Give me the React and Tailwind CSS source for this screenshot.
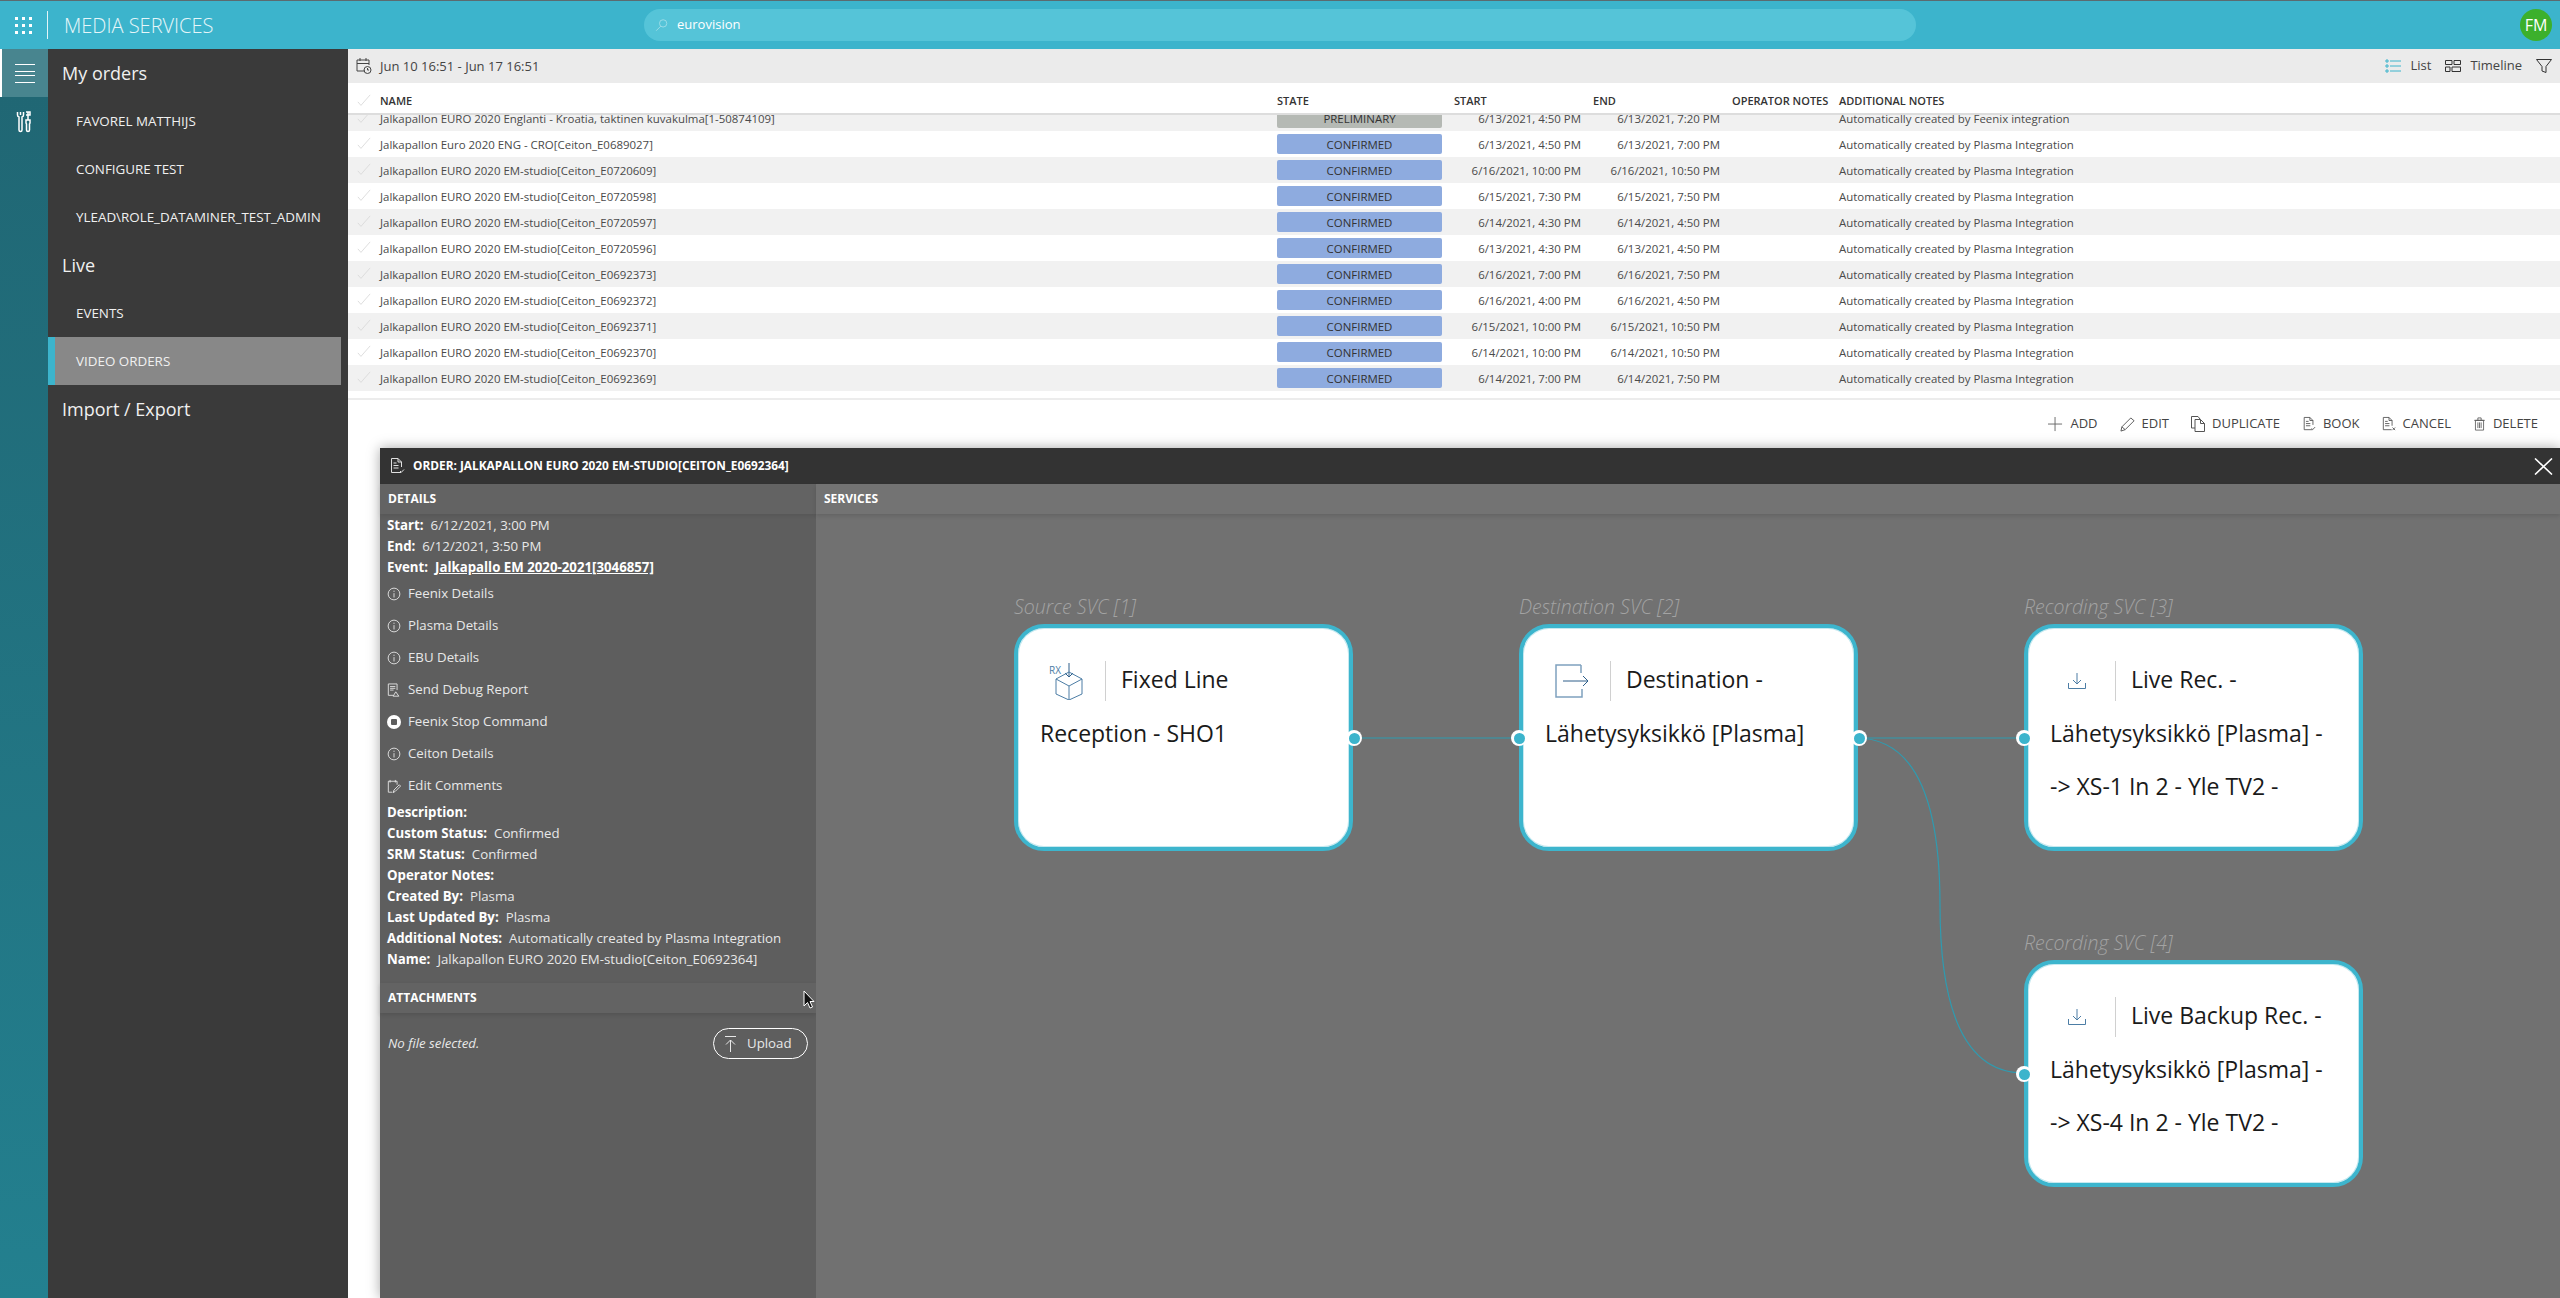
import React from 'react';

const rows = [
  { name: 'Jalkapallon EURO 2020 Englanti - Kroatia, taktinen kuvakulma[1-50874109]', state: 'PRELIMINARY', start: '6/13/2021, 4:50 PM', end: '6/13/2021, 7:20 PM', notes: 'Automatically created by Feenix integration' },
  { name: 'Jalkapallon Euro 2020 ENG - CRO[Ceiton_E0689027]', state: 'CONFIRMED', start: '6/13/2021, 4:50 PM', end: '6/13/2021, 7:00 PM' },
  { name: 'Jalkapallon EURO 2020 EM-studio[Ceiton_E0720609]', state: 'CONFIRMED', start: '6/16/2021, 10:00 PM', end: '6/16/2021, 10:50 PM' },
  { name: 'Jalkapallon EURO 2020 EM-studio[Ceiton_E0720598]', state: 'CONFIRMED', start: '6/15/2021, 7:30 PM', end: '6/15/2021, 7:50 PM' },
  { name: 'Jalkapallon EURO 2020 EM-studio[Ceiton_E0720597]', state: 'CONFIRMED', start: '6/14/2021, 4:30 PM', end: '6/14/2021, 4:50 PM' },
  { name: 'Jalkapallon EURO 2020 EM-studio[Ceiton_E0720596]', state: 'CONFIRMED', start: '6/13/2021, 4:30 PM', end: '6/13/2021, 4:50 PM' },
  { name: 'Jalkapallon EURO 2020 EM-studio[Ceiton_E0692373]', state: 'CONFIRMED', start: '6/16/2021, 7:00 PM', end: '6/16/2021, 7:50 PM' },
  { name: 'Jalkapallon EURO 2020 EM-studio[Ceiton_E0692372]', state: 'CONFIRMED', start: '6/16/2021, 4:00 PM', end: '6/16/2021, 4:50 PM' },
  { name: 'Jalkapallon EURO 2020 EM-studio[Ceiton_E0692371]', state: 'CONFIRMED', start: '6/15/2021, 10:00 PM', end: '6/15/2021, 10:50 PM' },
  { name: 'Jalkapallon EURO 2020 EM-studio[Ceiton_E0692370]', state: 'CONFIRMED', start: '6/14/2021, 10:00 PM', end: '6/14/2021, 10:50 PM' },
  { name: 'Jalkapallon EURO 2020 EM-studio[Ceiton_E0692369]', state: 'CONFIRMED', start: '6/14/2021, 7:00 PM', end: '6/14/2021, 7:50 PM' },
];

const cols = 'grid grid-cols-[32px_897px_177px_139px_139px_107px_1fr] items-center';

// all icons are thin 1px line drawings on a 16 box
function Ico({ className, children, box = '0 0 16 16' }) {
  return (
    <svg viewBox={box} fill="none" stroke="currentColor" strokeWidth="1" className={className}>
      {children}
    </svg>
  );
}

const Tick = () => (
  <Ico className="w-[14px] h-[14px] ml-[9px] text-[#d9d9d9]">
    <path d="M1 9l3.5 4L15 1" />
  </Ico>
);

const InfoIcon = () => (
  <Ico className="w-[14px] h-[14px]">
    <circle cx="8" cy="8" r="6.7" />
    <path d="M8 7v5M8 4.2v1.4" />
  </Ico>
);

const DocCheck = ({ className }) => (
  <Ico className={className}>
    <path d="M12 14.5H2.5v-14H9L12.5 4v5M9 .5V4h3.5M4.5 5h3M4.5 7.5h5M4.5 10h5M11 13l1.3 1.3L15 11.5" />
  </Ico>
);

function SideRow({ label, head, active }) {
  if (head) {
    return <div className="h-12 flex items-center pl-[14px] text-[18px] text-[#f0f0f0]">{label}</div>;
  }
  return (
    <div className={`h-12 mr-[7px] flex items-center text-[13.4px] text-[#f0f0f0] ${active ? 'bg-[#888888] border-l-[7px] border-[#3cb4cc] pl-[21px]' : 'pl-[28px]'}`}>
      {label}
    </div>
  );
}

function Row({ row, grey, clipped }) {
  return (
    <div className={`${cols} h-[26px] text-[11.45px] text-[#4a4a4a] ${grey ? 'bg-[#f1f1f1]' : 'bg-white'} ${clipped ? '-mt-[10px]' : ''}`}>
      <Tick />
      <div className="pt-[2px]">{row.name}</div>
      <div className={`w-[165px] h-5 pt-[1px] rounded-[2px] flex items-center justify-center text-[#333] ${row.state === 'PRELIMINARY' ? 'bg-[#b5b9b4]' : 'bg-[#8eabdf]'}`}>
        {row.state}
      </div>
      <div className="pt-[2px] text-right pr-[12px]">{row.start}</div>
      <div className="pt-[2px] text-right pr-[12px]">{row.end}</div>
      <div></div>
      <div className="pt-[2px]">{row.notes || 'Automatically created by Plasma Integration'}</div>
    </div>
  );
}

function Action({ icon, label }) {
  return (
    <div className="flex items-center gap-[7px] text-[13px] text-[#444]">
      {icon}
      <span>{label}</span>
    </div>
  );
}

function Field({ k, v }) {
  return (
    <div className="h-[21px] leading-[21px] whitespace-nowrap">
      <b className="font-bold text-white">{k}</b>
      {v && <span className="ml-[7px]">{v}</span>}
    </div>
  );
}

function DetailLink({ icon, label }) {
  return (
    <div className="h-8 flex items-center gap-[7px]">
      <span className="w-[14px] flex justify-center">{icon}</span>
      {label}
    </div>
  );
}

const RxIcon = () => (
  <Ico className="w-[36px] h-[38px] text-[#4c7da5]" box="0 0 36 38">
    <path d="M20 1v14M16 11l4 4 4-4" className="text-[#2e5f8a]" />
    <path d="M20 10l13 7v15l-13 6-13-6V17zM7 17l13 7 13-7M20 24v14M20 12v0" />
    <text x="0" y="12" fontSize="10" stroke="none" fill="#4c7da5">RX</text>
  </Ico>
);

const DestIcon = () => (
  <Ico className="w-[34px] h-[34px]" box="0 0 34 34">
    <path d="M26 1H1v32h26v-8M26 1v8" stroke="#7fa1bf" strokeWidth="1.5" />
    <path d="M8 17h25M28 12l5 5-5 5" stroke="#2e5f8a" />
  </Ico>
);

const RecIcon = () => (
  <Ico className="w-[18px] h-[16px] text-[#4c7da5]" box="0 0 18 16">
    <path d="M9 0v11M5 7l4 4 4-4M.5 10v5.5h17V10" />
  </Ico>
);

function Port({ side, top }) {
  return (
    <div className={`absolute w-4 h-4 rounded-full bg-white flex items-center justify-center ${side} ${top}`}>
      <div className="w-[11px] h-[11px] rounded-full bg-[#3cb4cc]"></div>
    </div>
  );
}

function ServiceNode({ pos, label, icon, title, lines, left, right }) {
  return (
    <div className={`absolute w-[339px] h-[227px] ${pos}`}>
      <div className="absolute -top-[29px] left-0 h-6 leading-6 italic font-light text-[19.5px] text-[#a3a3a3] whitespace-nowrap">{label}</div>
      <div className="relative h-full rounded-[30px] border-4 border-[#3db5cd] bg-white shadow-[inset_0_0_0_1px_#c6e9f0] pt-[26px] pl-[22px] text-[23px] text-[#1a1a1a]">
        <div className="flex h-[53px] items-center">
          <div className="w-[66px] h-10 pr-[11px] flex items-center justify-center shrink-0 border-r border-[#d0d0d0]">{icon}</div>
          <div className="pl-[15px] pb-[3px] whitespace-nowrap">{title}</div>
        </div>
        {lines.map((l) => (
          <div key={l} className="h-[53px] leading-[53px] whitespace-nowrap">{l}</div>
        ))}
        {left && <Port side="-left-[12px]" top="top-[102px]" />}
        {right && <Port side="-right-[13px]" top="top-[102px]" />}
      </div>
    </div>
  );
}

export default function App() {
  return (
    <div className="h-screen flex flex-col overflow-hidden bg-white font-['Open_Sans',sans-serif]">
      {/* top bar */}
      <div className="h-[49px] shrink-0 border-t border-[#5b6b70] bg-[#3cb4cc] flex items-center relative text-white">
        <div className="w-12 h-7 flex items-center justify-center border-r border-[#e3f5f8]">
          <div className="grid grid-cols-3 gap-[4px]">
            {[0, 1, 2, 3, 4, 5, 6, 7, 8].map((i) => (
              <div key={i} className="w-[3px] h-[3px] bg-white"></div>
            ))}
          </div>
        </div>
        <div className="ml-[16px] mt-[2px] text-[20px] font-light text-[#e6f6f9]">MEDIA SERVICES</div>
        <div className="absolute left-[644px] top-[8px] w-[1272px] h-8 rounded-full bg-[#55c4d8] flex items-center pl-[11px] gap-[9px] text-[13px]">
          <Ico className="w-[13px] h-[14px] text-[#a8e0ea]">
            <circle cx="10" cy="6" r="4.5" />
            <path d="M7 9.5L1.5 15" />
          </Ico>
          eurovision
        </div>
        <div className="ml-auto mr-2 w-8 h-8 rounded-full bg-[#3cb02c] flex items-center justify-center text-[16px]">FM</div>
      </div>

      <div className="flex-1 flex min-h-0">
        {/* icon rail */}
        <div className="w-12 shrink-0 bg-gradient-to-b from-[#206673] to-[#23808f]">
          <div className="h-12 bg-[#48858f] border-l-2 border-white flex flex-col items-center justify-center gap-[3px]">
            <div className="w-5 h-px bg-white"></div>
            <div className="w-5 h-px bg-white mt-[3px]"></div>
            <div className="w-5 h-px bg-white"></div>
            <div className="w-5 h-px bg-white mt-[3px]"></div>
          </div>
          <div className="h-[46px] pt-[3px] flex items-center justify-center text-white">
            <Ico className="w-[16px] h-[22px]" box="0 0 16 22">
              <path d="M1.5 1v3a2 2 0 0 0 1.500 2v13a1.500 1.500 0 0 0 3 0V6a2 2 0 0 0 1.500-2V1M4.500 1v3" strokeWidth="1.500" />
              <path d="M12 1v8M10 1h4v3h-4M10 9h4v3l-.5 1v6a1.500 1.500 0 0 1-3 0v-6l-.5-1z" strokeWidth="1.500" />
            </Ico>
          </div>
        </div>

        {/* sidebar */}
        <div className="w-[300px] shrink-0 bg-[#3a3a3a]">
          <SideRow head label="My orders" />
          <SideRow label="FAVOREL MATTHIJS" />
          <SideRow label="CONFIGURE TEST" />
          <SideRow label="YLEAD\ROLE_DATAMINER_TEST_ADMIN" />
          <SideRow head label="Live" />
          <SideRow label="EVENTS" />
          <SideRow active label="VIDEO ORDERS" />
          <SideRow head label="Import / Export" />
        </div>

        {/* main */}
        <div className="flex-1 min-w-0 flex flex-col">
          <div className="h-[34px] shrink-0 bg-[#ebebeb] flex items-center pl-2 pr-2 text-[13px] text-[#444]">
            <Ico className="w-4 h-[18px] text-[#444]" box="0 0 16 18">
              <path d="M9 14H1V3h12v5M1 6.500h12M4 1v3M10 1v3" />
              <circle cx="11.500" cy="13" r="3.500" />
              <path d="M11.500 11v2h1.500" />
            </Ico>
            <span className="ml-2 pt-[1px]">Jun 10 16:51 - Jun 17 16:51</span>
            <div className="ml-auto flex items-center gap-[9px]">
              <Ico className="w-4 h-4 text-[#3cb4cc]">
                <path d="M5 3h11M5 8h11M5 13h11M1 2h2v2H1zM1 7h2v2H1zM1 12h2v2H1z" />
              </Ico>
              <span>List</span>
              <Ico className="w-4 h-4 ml-[5px] text-[#333]">
                <path d="M.5 2.500h6.500v4H.5zM9 2.500h6.500v4H9zM.5 9h4.500v4.500H.5zM7 9h8.500v4.500H7z" />
              </Ico>
              <span>Timeline</span>
              <Ico className="w-4 h-4 ml-[5px] text-[#333]">
                <path d="M.5 1.500h15L10 8.500v6l-4-1.500V8.500z" />
              </Ico>
            </div>
          </div>

          {/* list */}
          <div className={`${cols} h-[30px] shrink-0 pt-[6px] text-[11px] font-semibold text-[#333]`}>
            <Tick />
            <div>NAME</div>
            <div>STATE</div>
            <div>START</div>
            <div>END</div>
            <div>OPERATOR NOTES</div>
            <div>ADDITIONAL NOTES</div>
          </div>
          <div className="h-[2px] shrink-0 bg-[#dddddd]"></div>
          <div className="h-[276px] shrink-0 overflow-hidden">
            {rows.map((row, i) => (
              <Row key={row.name + i} row={row} grey={i % 2 === 0} clipped={i === 0} />
            ))}
          </div>
          <div className="h-[9px] shrink-0 border-b-2 border-[#ececec]"></div>

          {/* actions */}
          <div className="h-12 shrink-0 flex items-center justify-end gap-[22px] pr-[22px]">
            <Action label="ADD" icon={<Ico className="w-[15px] h-[15px] text-[#666]"><path d="M7.500 0v15M0 7.500h15" /></Ico>} />
            <Action label="EDIT" icon={<Ico className="w-[15px] h-[15px] text-[#555]"><path d="M1 15l1-4.500L11.500 1 15 4 5.500 13.500zM2 10.500L5.500 13.500" /></Ico>} />
            <Action label="DUPLICATE" icon={<Ico className="w-[14px] h-4 text-[#555]" box="0 0 14 16"><path d="M4 12H.5V.5H7L9 3M4 3.500h5.500L13.500 7.500v8H4zM9.500 3.500v4h4" /></Ico>} />
            <Action label="BOOK" icon={<DocCheck className="w-[14px] h-4 text-[#555]" />} />
            <Action label="CANCEL" icon={<Ico className="w-[14px] h-4 text-[#555]"><path d="M11 14.500H1.500v-14H8L11.500 4v6M8 .5V4h3.500M3.500 5h3M3.500 7.500h5M3.500 10h5M12 12l3 3M15 12l-3 3" /></Ico>} />
            <Action label="DELETE" icon={<Ico className="w-[13px] h-4 text-[#555]"><path d="M3 3.500h10v12H3zM1.500 3.500h13M6 3.500v-3h4v3M6 6v7M8 6v7M10 6v7" /></Ico>} />
          </div>

          {/* order panel */}
          <div className="flex-1 min-h-0 ml-8 flex flex-col shadow-[0_0_12px_rgba(0,0,0,0.35)] text-[#e8e8e8]">
            <div className="h-9 shrink-0 bg-[#333333] flex items-center pl-[9px] pr-[7px] text-white">
              <DocCheck className="w-4 h-[18px] text-[#e0e0e0]" />
              <span className="ml-2 text-[11.85px] font-bold">ORDER: JALKAPALLON EURO 2020 EM-STUDIO[CEITON_E0692364]</span>
              <Ico className="w-[19px] h-[17px] ml-auto text-white" box="0 0 19 17">
                <path d="M1 .5l17 16M18 .5l-17 16" strokeWidth="1.600" />
              </Ico>
            </div>
            <div className="flex-1 min-h-0 flex">
              <div className="w-[436px] shrink-0 bg-[#5e5e5e] text-[13.25px] relative">
                <div className="h-[30px] flex items-center pl-2 bg-[#636363] text-[12px] font-bold text-white shadow-[0_2px_4px_rgba(0,0,0,0.08)]">DETAILS</div>
                <div className="px-[7px] pt-[1px]">
                  <Field k="Start:" v="6/12/2021, 3:00 PM" />
                  <Field k="End:" v="6/12/2021, 3:50 PM" />
                  <div className="h-[21px] leading-[21px] font-bold text-white">
                    Event:<span className="ml-[7px] underline">Jalkapallo EM 2020-2021[3046857]</span>
                  </div>
                  <div>
                    <DetailLink icon={<InfoIcon />} label="Feenix Details" />
                    <DetailLink icon={<InfoIcon />} label="Plasma Details" />
                    <DetailLink icon={<InfoIcon />} label="EBU Details" />
                    <DetailLink
                      label="Send Debug Report"
                      icon={<Ico className="w-[14px] h-[15px]"><path d="M7 13.500H1.500V.5h10v7M3.500 3.500h6M3.500 5.500h6M3.500 7.500h4M7 14.500l3-5 3.500 5z" /></Ico>}
                    />
                    <DetailLink
                      label="Feenix Stop Command"
                      icon={<div className="w-[14px] h-[14px] rounded-full bg-white flex items-center justify-center"><div className="w-[6px] h-[6px] rounded-[1px] bg-[#5e5e5e]"></div></div>}
                    />
                    <DetailLink icon={<InfoIcon />} label="Ceiton Details" />
                    <DetailLink
                      label="Edit Comments"
                      icon={<Ico className="w-[14px] h-[15px]"><path d="M6 14.500H1.500V2h10v4M3.500 .5v3M9.500 .5v3M7 15l1-3 6-6 1.500 1.500-6 6z" /></Ico>}
                    />
                  </div>
                  <div>
                    <Field k="Description:" />
                    <Field k="Custom Status:" v="Confirmed" />
                    <Field k="SRM Status:" v="Confirmed" />
                    <Field k="Operator Notes:" />
                    <Field k="Created By:" v="Plasma" />
                    <Field k="Last Updated By:" v="Plasma" />
                    <Field k="Additional Notes:" v="Automatically created by Plasma Integration" />
                    <Field k="Name:" v="Jalkapallon EURO 2020 EM-studio[Ceiton_E0692364]" />
                  </div>
                </div>
                <div className="mt-[13px] h-[30px] flex items-center pl-2 bg-[#636363] text-[12px] font-bold text-white shadow-[0_2px_4px_rgba(0,0,0,0.12)]">ATTACHMENTS</div>
                <div className="mt-[15px] pl-2 pr-[8px] flex items-center justify-between">
                  <span className="italic">No file selected.</span>
                  <div className="w-[95px] h-[31px] rounded-full border border-white flex items-center pl-[11px] gap-[11px]">
                    <Ico className="w-[11px] h-[16px]" box="0 0 11 16">
                      <path d="M0 .5h11M5.500 4v12M1 8.500L5.500 4 10 8.500" />
                    </Ico>
                    Upload
                  </div>
                </div>
                {/* mouse pointer */}
                <svg viewBox="0 0 12 19" className="absolute left-[423px] top-[506px] w-3 h-[19px]">
                  <path d="M1 1v15l3.500-3.500 2.500 5.500 2.500-1-2.500-5.500H11z" fill="#111" stroke="#fff" strokeWidth="1" />
                </svg>
              </div>

              <div className="flex-1 min-w-0 bg-[#717171] relative">
                <div className="h-[30px] flex items-center pl-2 bg-[#737373] text-[12px] font-bold text-white shadow-[0_2px_4px_rgba(0,0,0,0.12)]">SERVICES</div>
                <svg className="absolute inset-0 w-full h-full" fill="none" stroke="#2f9bb0" strokeWidth="1.2">
                  <path d="M536 254H704M1040 254H1208" />
                  <path d="M1040 254C1094 254 1124 306 1124 421C1124 536 1154 589 1208 589" />
                </svg>
                <ServiceNode
                  pos="left-[198px] top-[140px]"
                  label="Source SVC [1]"
                  icon={<RxIcon />}
                  title="Fixed Line"
                  lines={['Reception - SHO1']}
                  right
                />
                <ServiceNode
                  pos="left-[703px] top-[140px]"
                  label="Destination SVC [2]"
                  icon={<DestIcon />}
                  title="Destination -"
                  lines={['Lähetysyksikkö [Plasma]']}
                  left
                  right
                />
                <ServiceNode
                  pos="left-[1208px] top-[140px]"
                  label="Recording SVC [3]"
                  icon={<RecIcon />}
                  title="Live Rec. -"
                  lines={['Lähetysyksikkö [Plasma] -', '-> XS-1 In 2 - Yle TV2 -']}
                  left
                />
                <ServiceNode
                  pos="left-[1208px] top-[476px]"
                  label="Recording SVC [4]"
                  icon={<RecIcon />}
                  title="Live Backup Rec. -"
                  lines={['Lähetysyksikkö [Plasma] -', '-> XS-4 In 2 - Yle TV2 -']}
                  left
                />
              </div>
            </div>
          </div>
        </div>
      </div>
    </div>
  );
}
